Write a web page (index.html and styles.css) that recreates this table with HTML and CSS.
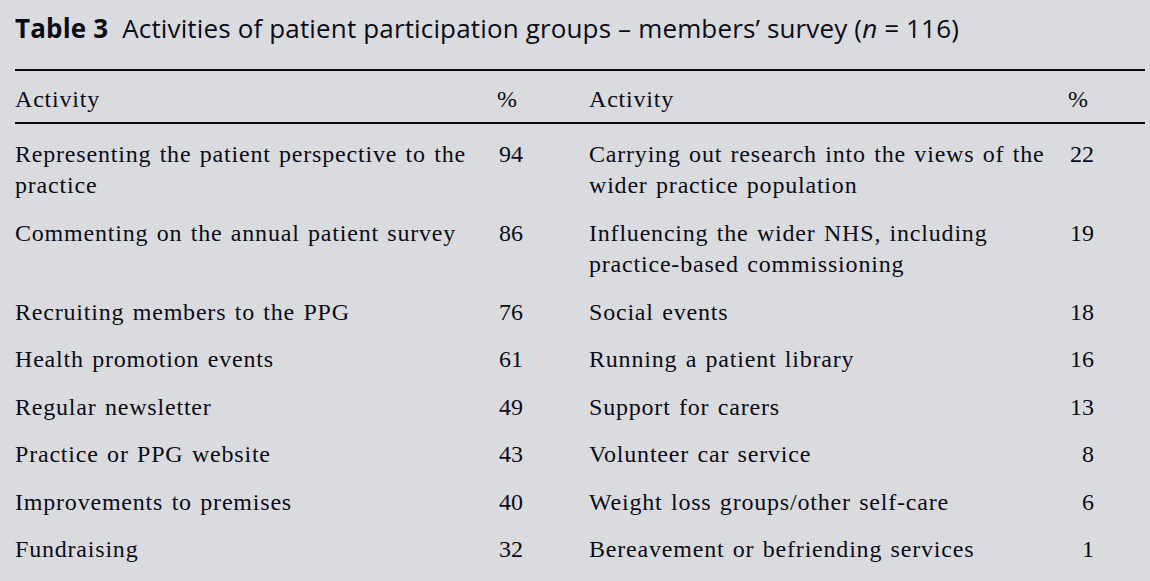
FILE: index.html
```html
<!DOCTYPE html>
<html lang="en">
<head>
<meta charset="utf-8">
<title>Table 3</title>
<link rel="stylesheet" href="styles.css">
</head>
<body>
<div class="page">
  <h1 class="caption"><span class="label">Table 3</span><span class="title">Activities of patient participation groups – members’ survey (<i>n</i> = 116)</span></h1>
  <table class="data">
    <colgroup>
      <col class="c-act"><col class="c-pct"><col class="c-act2"><col class="c-pct2">
    </colgroup>
    <thead>
      <tr><th>Activity</th><th>%</th><th>Activity</th><th>%</th></tr>
    </thead>
    <tbody>
      <tr><td>Representing the patient perspective to the practice</td><td class="num"><span class="n">94</span></td><td>Carrying out research into the views of the wider practice population</td><td class="num"><span class="n">22</span></td></tr>
      <tr><td>Commenting on the annual patient survey</td><td class="num"><span class="n">86</span></td><td>Influencing the wider NHS, including practice-based commissioning</td><td class="num"><span class="n">19</span></td></tr>
      <tr><td>Recruiting members to the PPG</td><td class="num"><span class="n">76</span></td><td>Social events</td><td class="num"><span class="n">18</span></td></tr>
      <tr><td>Health promotion events</td><td class="num"><span class="n">61</span></td><td>Running a patient library</td><td class="num"><span class="n">16</span></td></tr>
      <tr><td>Regular newsletter</td><td class="num"><span class="n">49</span></td><td>Support for carers</td><td class="num"><span class="n">13</span></td></tr>
      <tr><td>Practice or PPG website</td><td class="num"><span class="n">43</span></td><td>Volunteer car service</td><td class="num"><span class="n">8</span></td></tr>
      <tr><td>Improvements to premises</td><td class="num"><span class="n">40</span></td><td>Weight loss groups/other self-care</td><td class="num"><span class="n">6</span></td></tr>
      <tr><td>Fundraising</td><td class="num"><span class="n">32</span></td><td>Bereavement or befriending services</td><td class="num"><span class="n">1</span></td></tr>
    </tbody>
  </table>
</div>
</body>
</html>
```

FILE: styles.css
```css
html, body {
  margin: 0;
  padding: 0;
  background: #dadbdf;
}

.page {
  padding: 0 5px 0 15px;
  color: #0b0b16;
}

.caption {
  margin: 0;
  padding-top: 11px;
  height: 69px;
  box-sizing: border-box;
  font-family: "Open Sans", "DejaVu Sans", sans-serif;
  font-weight: 400;
  font-size: 26px;
  letter-spacing: 0.15px;
  line-height: 34px;
  white-space: nowrap;
}

.caption .label {
  font-weight: 700;
  margin-right: 14px;
}

.data {
  width: 1130px;
  border-collapse: collapse;
  table-layout: fixed;
  font-family: "Liberation Serif", "Times New Roman", serif;
  font-size: 24px;
  letter-spacing: 0.8px;
  word-spacing: 1.6px;
  line-height: 31.5px;
}

.c-act { width: 482px; }
.c-pct { width: 92px; }
.c-act2 { width: 479px; }
.c-pct2 { width: 77px; }

.data thead tr {
  border-top: 2px solid #0b0b16;
  border-bottom: 2px solid #0b0b16;
}

.data th {
  font-weight: 400;
  text-align: left;
  padding: 13px 0 6px 0;
  vertical-align: top;
}

.data td {
  padding: 8px 8px 8px 0;
  vertical-align: top;
  text-align: left;
}

.data tbody tr:first-child td {
  padding-top: 15px;
}

.data td.num {
  padding-right: 0;
}

.n {
  display: inline-block;
  width: 26px;
  letter-spacing: 0;
  text-align: right;
}
```
